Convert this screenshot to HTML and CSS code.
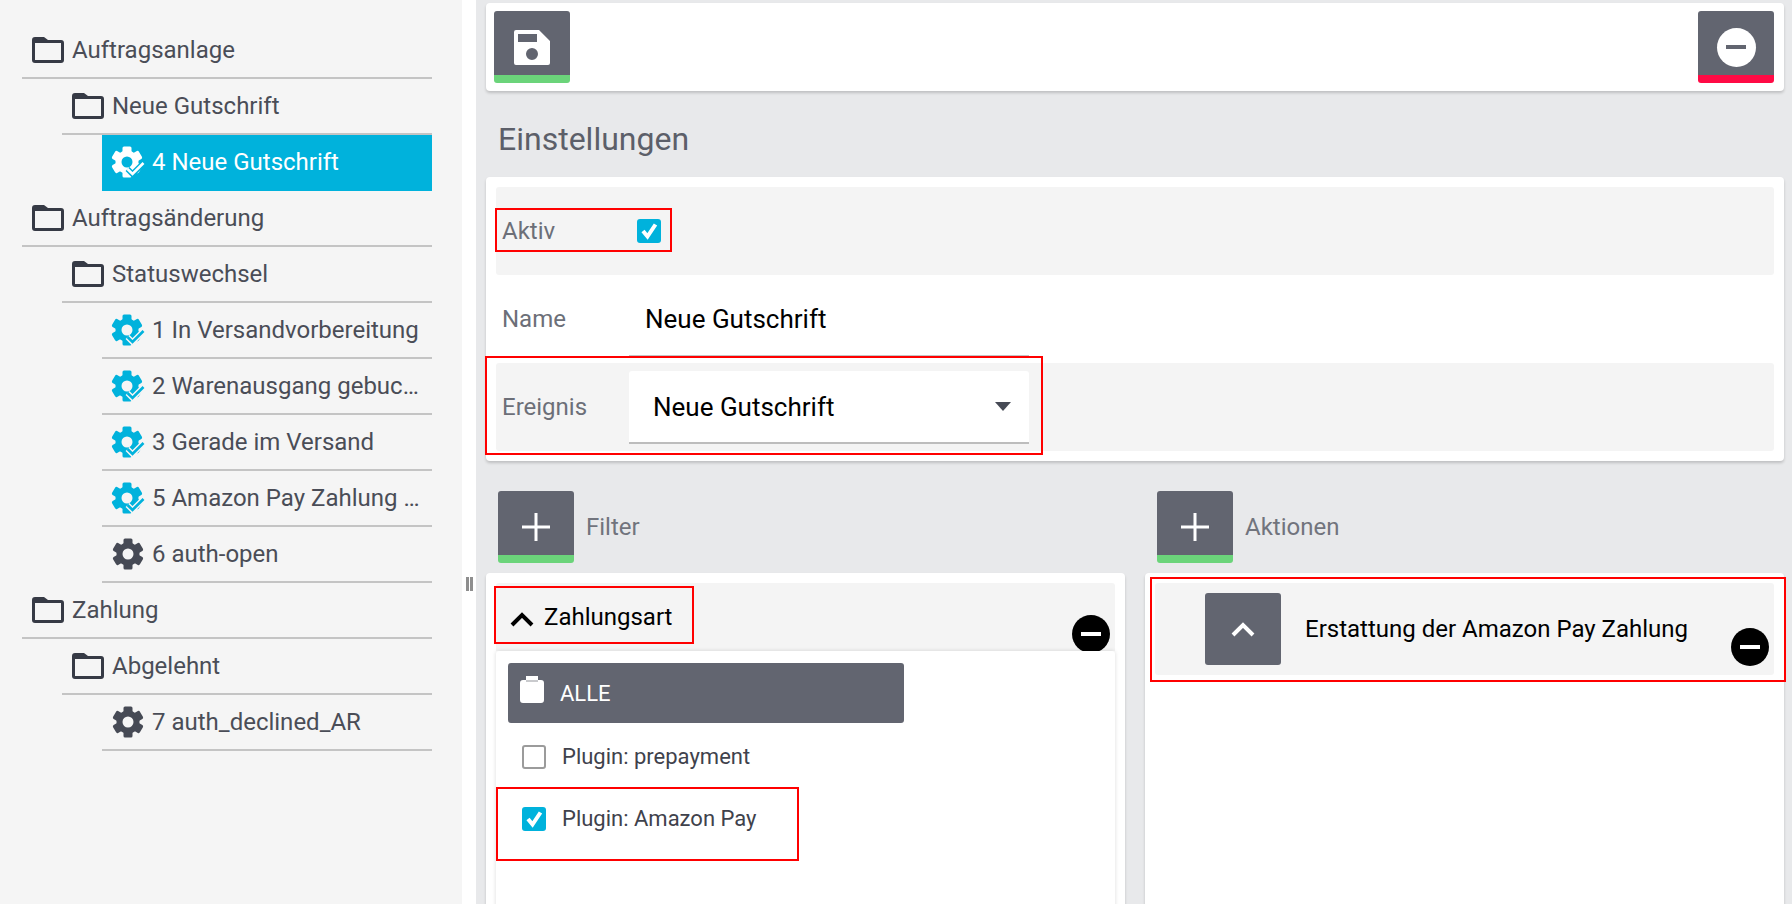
FILE: index.html
```html
<!DOCTYPE html>
<html lang="de">
<head>
<meta charset="utf-8">
<title>Einstellungen</title>
<link rel="stylesheet" href="styles.css">
</head>
<body>
<svg class="defs" aria-hidden="true">
  <defs>
    <symbol id="folder" viewBox="0 0 32 26">
      <path fill="currentColor" fill-rule="evenodd" d="M3 0H12L16 3H29a3 3 0 0 1 3 3V23a3 3 0 0 1-3 3H3a3 3 0 0 1-3-3V3a3 3 0 0 1 3-3zM3 6V23H29V6z"/>
    </symbol>
    <symbol id="gear" viewBox="0 0 34 32">
      <circle cx="17" cy="16" r="8.5" fill="none" stroke="currentColor" stroke-width="6"/>
      <g fill="currentColor">
        <rect x="12.5" y="0.5" width="9" height="7" rx="1.5"/>
        <rect x="12.5" y="0.5" width="9" height="7" rx="1.5" transform="rotate(60 17 16)"/>
        <rect x="12.5" y="0.5" width="9" height="7" rx="1.5" transform="rotate(120 17 16)"/>
        <rect x="12.5" y="0.5" width="9" height="7" rx="1.5" transform="rotate(180 17 16)"/>
        <rect x="12.5" y="0.5" width="9" height="7" rx="1.5" transform="rotate(240 17 16)"/>
        <rect x="12.5" y="0.5" width="9" height="7" rx="1.5" transform="rotate(300 17 16)"/>
      </g>
    </symbol>
    <symbol id="gearcheck" viewBox="0 0 34 32">
      <use href="#gear" x="-1" width="34" height="32"/>
      <polyline points="16.5,23 21.5,28 33,16.5" fill="none" stroke="var(--halo)" stroke-width="5.5"/>
      <polyline points="16.5,23 21.5,28 32.5,17" fill="none" stroke="currentColor" stroke-width="2.6"/>
    </symbol>
    <symbol id="chev" viewBox="0 0 24 15">
      <polyline points="2,13 12,3 22,13" fill="none" stroke="currentColor" stroke-width="4"/>
    </symbol>
    <symbol id="plus" viewBox="0 0 28 28">
      <path fill="currentColor" d="M12.5 0h3v12.5H28v3H15.5V28h-3V15.5H0v-3h12.5z"/>
    </symbol>
    <symbol id="tick" viewBox="0 0 24 24">
      <polyline points="6,12 10.5,17.5 18.5,5.5" fill="none" stroke="#fff" stroke-width="4"/>
    </symbol>
  </defs>
</svg>

<div class="app">
  <aside class="sidebar">
    <div class="row lvl0"><svg class="ico-folder"><use href="#folder"/></svg><span class="label">Auftragsanlage</span></div>
    <div class="row lvl1"><svg class="ico-folder"><use href="#folder"/></svg><span class="label">Neue Gutschrift</span></div>
    <div class="row lvl2 selected"><svg class="ico-gear"><use href="#gearcheck"/></svg><span class="label">4 Neue Gutschrift</span></div>
    <div class="row lvl0"><svg class="ico-folder"><use href="#folder"/></svg><span class="label">Auftragsänderung</span></div>
    <div class="row lvl1"><svg class="ico-folder"><use href="#folder"/></svg><span class="label">Statuswechsel</span></div>
    <div class="row lvl2 active"><svg class="ico-gear"><use href="#gearcheck"/></svg><span class="label">1 In Versandvorbereitung</span></div>
    <div class="row lvl2 active"><svg class="ico-gear"><use href="#gearcheck"/></svg><span class="label">2 Warenausgang gebucht</span></div>
    <div class="row lvl2 active"><svg class="ico-gear"><use href="#gearcheck"/></svg><span class="label">3 Gerade im Versand</span></div>
    <div class="row lvl2 active"><svg class="ico-gear"><use href="#gearcheck"/></svg><span class="label">5 Amazon Pay Zahlung eingegangen</span></div>
    <div class="row lvl2"><svg class="ico-gear"><use href="#gear"/></svg><span class="label">6 auth-open</span></div>
    <div class="row lvl0"><svg class="ico-folder"><use href="#folder"/></svg><span class="label">Zahlung</span></div>
    <div class="row lvl1"><svg class="ico-folder"><use href="#folder"/></svg><span class="label">Abgelehnt</span></div>
    <div class="row lvl2"><svg class="ico-gear"><use href="#gear"/></svg><span class="label">7 auth_declined_AR</span></div>
  </aside>

  <div class="splitter"><span class="handle"></span></div>

  <main class="main">
    <section class="card toolbar">
      <button class="btn btn-ok" type="button">
        <svg class="ico-save" viewBox="0 0 36 35"><path fill="#fff" fill-rule="evenodd" d="M2 0H25L36 11V33a2 2 0 0 1-2 2H2a2 2 0 0 1-2-2V2a2 2 0 0 1 2-2zM4 4V12H23V4zM18 18a6 6 0 1 0 0 12a6 6 0 1 0 0-12z"/></svg>
      </button>
      <button class="btn btn-danger" type="button">
        <span class="minus-white"></span>
      </button>
    </section>

    <h1 class="title">Einstellungen</h1>

    <section class="card settings">
      <div class="field shaded">
        <span class="field-label">Aktiv</span>
        <span class="checkbox checked offset"><svg class="tick"><use href="#tick"/></svg></span>
      </div>
      <div class="field">
        <span class="field-label">Name</span>
        <div class="input">Neue Gutschrift</div>
      </div>
      <div class="field shaded">
        <span class="field-label">Ereignis</span>
        <div class="select">
          <span>Neue Gutschrift</span>
          <svg class="caret" viewBox="0 0 16 9"><polygon points="0,0 16,0 8,9" fill="currentColor"/></svg>
        </div>
      </div>
    </section>

    <div class="columns">
      <div class="column">
        <div class="col-head">
          <button class="btn btn-ok" type="button"><svg class="ico-plus"><use href="#plus"/></svg></button>
          <span class="col-title">Filter</span>
        </div>
        <section class="card col-card">
          <div class="filter-head">
            <svg class="ico-chev-dark"><use href="#chev"/></svg>
            <span class="filter-name">Zahlungsart</span>
            <span class="remove remove-filter"></span>
          </div>
          <div class="filter-body">
            <div class="all-bar">
              <svg class="ico-clip" viewBox="0 0 24 27"><path fill="#fff" d="M6 0H18V4H21a3 3 0 0 1 3 3V24a3 3 0 0 1-3 3H3a3 3 0 0 1-3-3V7a3 3 0 0 1 3-3H6z"/><rect x="6" y="4" width="12" height="2" fill="#c9cacd"/></svg>
              <span>ALLE</span>
            </div>
            <div class="option"><span class="checkbox"></span><span>Plugin: prepayment</span></div>
            <div class="option"><span class="checkbox checked"><svg class="tick"><use href="#tick"/></svg></span><span>Plugin: Amazon Pay</span></div>
          </div>
        </section>
      </div>

      <div class="column">
        <div class="col-head">
          <button class="btn btn-ok" type="button"><svg class="ico-plus"><use href="#plus"/></svg></button>
          <span class="col-title">Aktionen</span>
        </div>
        <section class="card col-card">
          <div class="action-row">
            <button class="btn" type="button"><svg class="ico-chev-light"><use href="#chev"/></svg></button>
            <span class="action-name">Erstattung der Amazon Pay Zahlung</span>
            <span class="remove remove-action"></span>
          </div>
        </section>
      </div>
    </div>
  </main>
</div>

<div class="mark mark-aktiv"></div>
<div class="mark mark-ereignis"></div>
<div class="mark mark-zahlungsart"></div>
<div class="mark mark-amazon"></div>
<div class="mark mark-aktion"></div>
</body>
</html>
```

FILE: styles.css
```css
* { box-sizing: border-box; }

html, body {
  margin: 0;
  height: 904px;
  overflow: hidden;
}

body {
  font-family: Roboto, "Liberation Sans", sans-serif;
  background: #fff;
  position: relative;
}

.defs { position: absolute; width: 0; height: 0; }

.app {
  display: flex;
  height: 904px;
}

/* Sidebar tree */
.sidebar {
  width: 462px;
  flex: none;
  background: #f5f5f5;
  padding: 23px 30px 0 22px;
  --halo: #f5f5f5;
}

.row {
  display: flex;
  align-items: center;
  height: 56px;
  border-bottom: 2px solid #c4c4c4;
  font-size: 24px;
  color: #4a4d57;
  white-space: nowrap;
}

.lvl0 { padding-left: 10px; gap: 8px; }
.lvl1 { margin-left: 40px; padding-left: 10px; gap: 8px; }
.lvl2 { margin-left: 80px; padding-left: 9px; gap: 7px; }

.label {
  min-width: 0;
  overflow: hidden;
  text-overflow: ellipsis;
  margin-right: 12px;
}

.ico-folder { width: 32px; height: 26px; flex: none; color: #363a45; }
.ico-gear { width: 34px; height: 32px; flex: none; color: #464a55; }

.active .ico-gear { color: #00b2dc; }

.selected {
  background: #00b2dc;
  border-bottom-color: #00b2dc;
  color: #fff;
  --halo: #00b2dc;
}
.selected .ico-gear { color: #fff; }

/* Splitter */
.splitter {
  width: 14px;
  flex: none;
  padding: 577px 0 0 4px;
}
.handle {
  display: block;
  width: 7px;
  height: 14px;
  border-left: 3px solid #8e8e8e;
  border-right: 3px solid #8e8e8e;
}

/* Main */
.main {
  flex: 1;
  min-width: 0;
  height: 904px;
  overflow: hidden;
  background: #e8e9eb;
  padding: 3px 8px 0 10px;
}

.card {
  background: #fff;
  border-radius: 4px;
  box-shadow: 0 2px 3px rgba(0, 0, 0, 0.18);
}

.btn {
  width: 76px;
  height: 72px;
  flex: none;
  display: flex;
  align-items: center;
  justify-content: center;
  padding: 0;
  border: 0;
  border-radius: 3px;
  background: #626570;
}
.btn-ok { border-bottom: 8px solid #6bd47a; padding-top: 8px; }
.btn-danger { border-bottom: 8px solid #ff0a45; padding-top: 8px; }

.toolbar {
  height: 88px;
  display: flex;
  justify-content: space-between;
  padding: 8px 10px 8px 8px;
}

.ico-save { width: 36px; height: 35px; }

.minus-white {
  width: 39px;
  height: 39px;
  border-radius: 50%;
  background: #fff;
  display: flex;
  align-items: center;
  justify-content: center;
}
.minus-white::before {
  content: "";
  width: 20px;
  height: 4px;
  background: #626570;
}

.title {
  margin: 0;
  height: 86px;
  padding: 10px 0 0 12px;
  display: flex;
  align-items: center;
  font-size: 32px;
  font-weight: 400;
  color: #5c5f69;
}

.settings { height: 284px; padding: 10px; }

.field {
  height: 88px;
  display: flex;
  align-items: center;
  padding-left: 6px;
  border-radius: 3px;
}
.shaded { background: #f4f4f4; }

.field-label {
  width: 127px;
  flex: none;
  font-size: 24px;
  color: #6c6f78;
}

.input {
  width: 400px;
  height: 82px;
  align-self: flex-start;
  display: flex;
  align-items: center;
  padding: 8px 0 0 16px;
  font-size: 26px;
  color: #000;
  border-bottom: 2px solid #c4c4c4;
}

.select {
  width: 400px;
  height: 73px;
  margin-top: 1px;
  display: flex;
  align-items: center;
  justify-content: space-between;
  padding: 0 18px 0 24px;
  background: #fff;
  border-bottom: 2px solid #bdbdbd;
  border-radius: 3px 3px 0 0;
  font-size: 26px;
  color: #000;
}

.caret { width: 16px; height: 9px; color: #464a55; }

.checkbox {
  width: 24px;
  height: 24px;
  flex: none;
  display: block;
  border: 2px solid #9b9b9b;
  border-radius: 3px;
  background: #fff;
}
.checkbox.checked {
  border: 0;
  background: #00b2dc;
}
.offset { margin-left: 8px; }
.tick { display: block; width: 24px; height: 24px; }

/* Filter / action columns */
.columns {
  display: flex;
  gap: 20px;
  margin-top: 30px;
}
.column { flex: 1; min-width: 0; }

.col-head {
  display: flex;
  align-items: center;
  gap: 12px;
  padding-left: 12px;
  margin-bottom: 10px;
}
.col-title { font-size: 24px; color: #71747d; }

.ico-plus { width: 28px; height: 28px; color: #fff; }

.col-card {
  height: 340px;
  padding: 10px;
}

.filter-head {
  position: relative;
  height: 68px;
  display: flex;
  align-items: center;
  gap: 10px;
  padding-left: 14px;
  background: #f4f4f4;
  border-radius: 3px 3px 0 0;
}
.ico-chev-dark { width: 24px; height: 15px; margin-top: 4px; color: #000; }
.filter-name { font-size: 24px; color: #000; }

.remove {
  position: absolute;
  width: 38px;
  height: 38px;
  border-radius: 50%;
  background: #000;
  display: flex;
  align-items: center;
  justify-content: center;
}
.remove::before {
  content: "";
  width: 20px;
  height: 4px;
  background: #fff;
}
.remove-filter { right: 5px; top: 32px; }
.remove-action { right: 5px; bottom: 9px; }

.filter-body {
  position: relative;
  height: 260px;
  padding: 12px;
  background: #fff;
  border-radius: 3px;
  box-shadow: 0 0 4px rgba(0, 0, 0, 0.14);
}

.all-bar {
  width: 396px;
  height: 60px;
  display: flex;
  align-items: center;
  gap: 16px;
  padding-left: 12px;
  margin-bottom: 2px;
  background: #626570;
  border-radius: 3px;
  font-size: 22px;
  color: #fff;
}
.ico-clip { width: 24px; height: 27px; margin-bottom: 7px; }

.option {
  height: 62px;
  display: flex;
  align-items: center;
  gap: 16px;
  padding-left: 14px;
  font-size: 22px;
  color: #3f424c;
}
.option .checkbox { margin-top: 2px; }

.action-row {
  position: relative;
  height: 92px;
  display: flex;
  align-items: center;
  gap: 24px;
  padding-left: 50px;
  background: #f4f4f4;
  border-radius: 3px;
}
.ico-chev-light { width: 24px; height: 15px; color: #fff; }
.action-name { font-size: 24px; color: #000; }

/* Red annotation frames drawn over the screenshot */
.mark {
  position: absolute;
  border: 2px solid #f00;
  pointer-events: none;
}
.mark-aktiv { left: 495px; top: 208px; width: 177px; height: 44px; }
.mark-ereignis { left: 485px; top: 356px; width: 558px; height: 99px; }
.mark-zahlungsart { left: 494px; top: 586px; width: 200px; height: 58px; }
.mark-amazon { left: 496px; top: 787px; width: 303px; height: 74px; }
.mark-aktion { left: 1150px; top: 577px; width: 636px; height: 105px; }
```
